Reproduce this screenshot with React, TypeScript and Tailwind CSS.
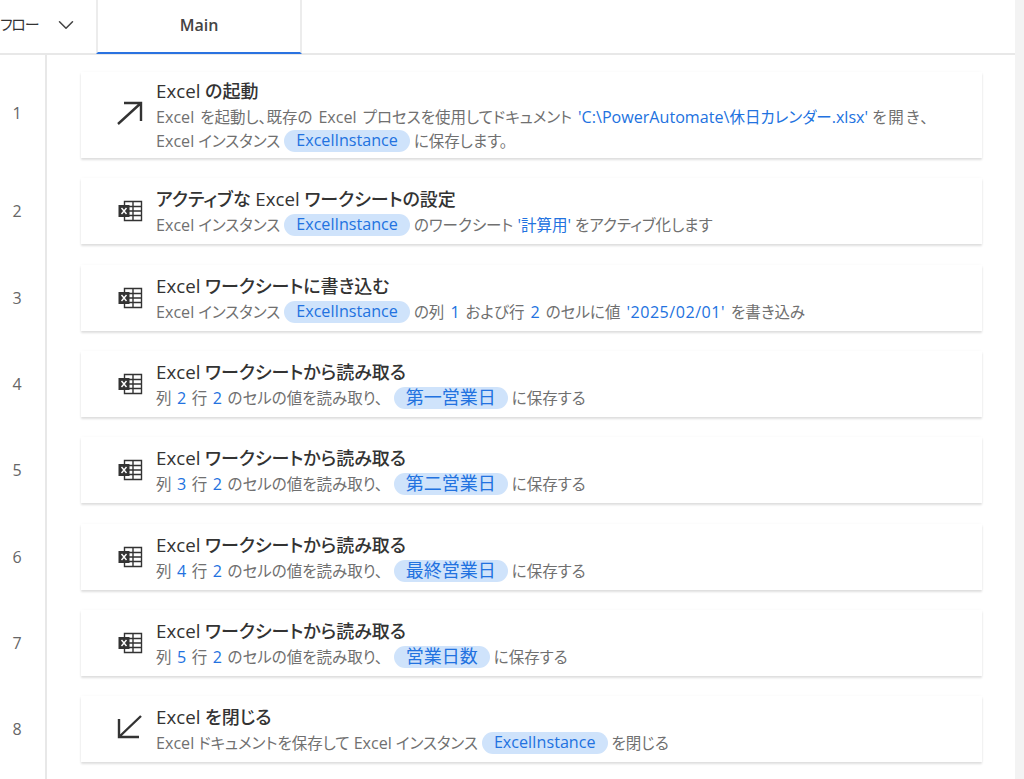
import React from "react";
import { ChevronDown } from "lucide-react";

// Latin runs render wider than the kana in the reference, so they get their own size
const T = ({ children }: { children: string }) => (
  <>
    {children.split(/([A-Za-z0-9:\\/'.]+)/).map((part, i) =>
      i % 2 === 1 ? (
        <span key={i} className="text-[1.04em]">
          {part}
        </span>
      ) : (
        part
      )
    )}
  </>
);

const Pill = ({ children }: { children: string }) => (
  <span className="-my-1 inline-block h-[22px] -translate-y-0.5 rounded-full bg-[#cfe3fb] px-3 align-middle leading-[21px] text-[#2272e0]">
    <T>{children}</T>
  </span>
);

// variable names in kanji come out larger than the surrounding text
const KanjiPill = ({ children }: { children: string }) => (
  <span className="-my-1 ml-[11px] inline-block h-[22px] -translate-y-0.5 rounded-full bg-[#cfe3fb] px-3 align-middle text-[18px] leading-[21px] text-[#2272e0]">
    {children}
  </span>
);

const Val = ({ children }: { children: string }) => (
  <span className="text-[#2272e0]">
    <T>{children}</T>
  </span>
);

const ArrowOut = () => (
  <svg width="28" height="25" viewBox="0 0 28 25" fill="none" stroke="#333" strokeWidth="2.4">
    <path d="M2 24 L25 3 M8 3 H25 V21" />
  </svg>
);

const ArrowIn = () => (
  <svg width="28" height="25" viewBox="0 0 28 25" fill="none" stroke="#333" strokeWidth="2.4">
    <path d="M25 1 L3 22 M3 4 V22 H23" />
  </svg>
);

const ExcelIcon = () => (
  <svg width="25" height="22" viewBox="0 0 25 22" fill="none">
    <path d="M6.5 1.5H23.5V20.5H6.5Z M15 1.5V20.5 M6.5 6.5H23.5 M6.5 11H23.5 M6.5 15.5H23.5" stroke="#333" strokeWidth="1.4" />
    <rect x="0.5" y="5" width="11" height="12" fill="#333" />
    <path d="M3.5 8 L8.5 14 M8.5 8 L3.5 14" stroke="#fff" strokeWidth="1.4" />
  </svg>
);

const ReadDesc = ({ col, name }: { col: string; name: string }) => (
  <>
    <span className="[word-spacing:1.5px]">
      列 <Val>{col}</Val> 行 <Val>2</Val> のセルの値を読み取り、
    </span>
    <KanjiPill>{name}</KanjiPill> に保存する
  </>
);

type Step = {
  icon: "out" | "in" | "excel";
  title: string;
  desc: React.ReactNode;
};

const steps: Step[] = [
  {
    icon: "out",
    title: "Excel の起動",
    desc: (
      <>
        <span className="[word-spacing:2px]">
          <T>Excel を起動し、既存の Excel プロセスを使用してドキュメント</T>{" "}
        </span>
        <Val>'C:\PowerAutomate\休日カレンダー.xlsx'</Val> <span className="tracking-[2px]">を開き、</span>
        <br />
        <T>Excel インスタンス</T> <Pill>ExcelInstance</Pill> に保存します。
      </>
    ),
  },
  {
    icon: "excel",
    title: "アクティブな Excel ワークシートの設定",
    desc: (
      <>
        <T>Excel インスタンス</T> <Pill>ExcelInstance</Pill> のワークシート <Val>'計算用'</Val> をアクティブ化します
      </>
    ),
  },
  {
    icon: "excel",
    title: "Excel ワークシートに書き込む",
    desc: (
      <>
        <T>Excel インスタンス</T> <Pill>ExcelInstance</Pill>{" "}
        <span className="[word-spacing:2px]">
          の列 <Val>1</Val> および行 <Val>2</Val> のセルに値{" "}
          <span className="tracking-[0.5px]">
            <Val>'2025/02/01'</Val>
          </span>{" "}
          を書き込み
        </span>
      </>
    ),
  },
  { icon: "excel", title: "Excel ワークシートから読み取る", desc: <ReadDesc col="2" name="第一営業日" /> },
  { icon: "excel", title: "Excel ワークシートから読み取る", desc: <ReadDesc col="3" name="第二営業日" /> },
  { icon: "excel", title: "Excel ワークシートから読み取る", desc: <ReadDesc col="4" name="最終営業日" /> },
  { icon: "excel", title: "Excel ワークシートから読み取る", desc: <ReadDesc col="5" name="営業日数" /> },
  {
    icon: "in",
    title: "Excel を閉じる",
    desc: (
      <>
        <T>Excel ドキュメントを保存して Excel インスタンス</T> <Pill>ExcelInstance</Pill> を閉じる
      </>
    ),
  },
];

export default function App() {
  return (
    <div
      className="flex h-[779px] w-[1024px] flex-col overflow-hidden bg-white [font-feature-settings:'palt']"
      style={{ fontFamily: '"Open Sans", "Noto Sans CJK JP", sans-serif' }}
    >
      {/* Header tabs */}
      <div className="flex h-[55px] shrink-0">
        <div className="flex flex-1 border-b-2 border-[#e8e8e8]">
          <div className="flex h-[53px] w-[96px] items-center justify-between pr-[17px] pb-[4px]">
            <span className="text-[15px] tracking-[-1.2px] text-[#333]">フロー</span>
            <ChevronDown size={26} strokeWidth={1.4} color="#444" />
          </div>
          <div className="flex h-[54px] w-[206px] items-center justify-center border-x-2 border-b-2 border-x-[#ececec] border-b-[#2a72e0] pb-[3px] text-[16px] font-semibold text-[#444]">
            Main
          </div>
        </div>
        <div className="w-[9px] bg-[#f3f3f3]" />
      </div>

      {/* Flow list */}
      <div className="flex flex-1">
        <div className="w-[47px] shrink-0 border-r-2 border-[#e8e8e8]" />
        <div className="-ml-[47px] flex flex-1 flex-col gap-[20.33px] pt-[17px]">
          {steps.map((step, i) => (
            <div key={i} className="flex">
              <div
                className={
                  i === 0
                    ? "flex w-[47px] shrink-0 items-center justify-center pr-[13px] pb-1 text-[16px] text-[#666]"
                    : "flex w-[47px] shrink-0 items-center justify-center pr-[13px] text-[16px] text-[#666]"
                }
              >
                {i + 1}
              </div>
              <div className="ml-[34px] flex min-h-[66px] w-[901px] items-center bg-white shadow-[0_2px_2px_rgba(0,0,0,0.12),0_0_3px_rgba(0,0,0,0.03)]">
                <div className="flex w-[75px] shrink-0 justify-end pr-[13px]">
                  {step.icon === "out" && <div className="mb-[6px] -mr-px"><ArrowOut /></div>}
                  {step.icon === "in" && <div className="mb-[4px] -mr-px"><ArrowIn /></div>}
                  {step.icon === "excel" && <ExcelIcon />}
                </div>
                <div className="pt-[6px] pb-[5px]">
                  <div className="text-[18px] leading-[26px] font-medium text-[#333]">
                    <T>{step.title}</T>
                  </div>
                  <div className="pt-px text-[15.5px] leading-[24px] text-[#707070]">{step.desc}</div>
                </div>
              </div>
            </div>
          ))}
        </div>
        <div className="w-[9px] bg-[#f3f3f3]" />
      </div>
    </div>
  );
}
